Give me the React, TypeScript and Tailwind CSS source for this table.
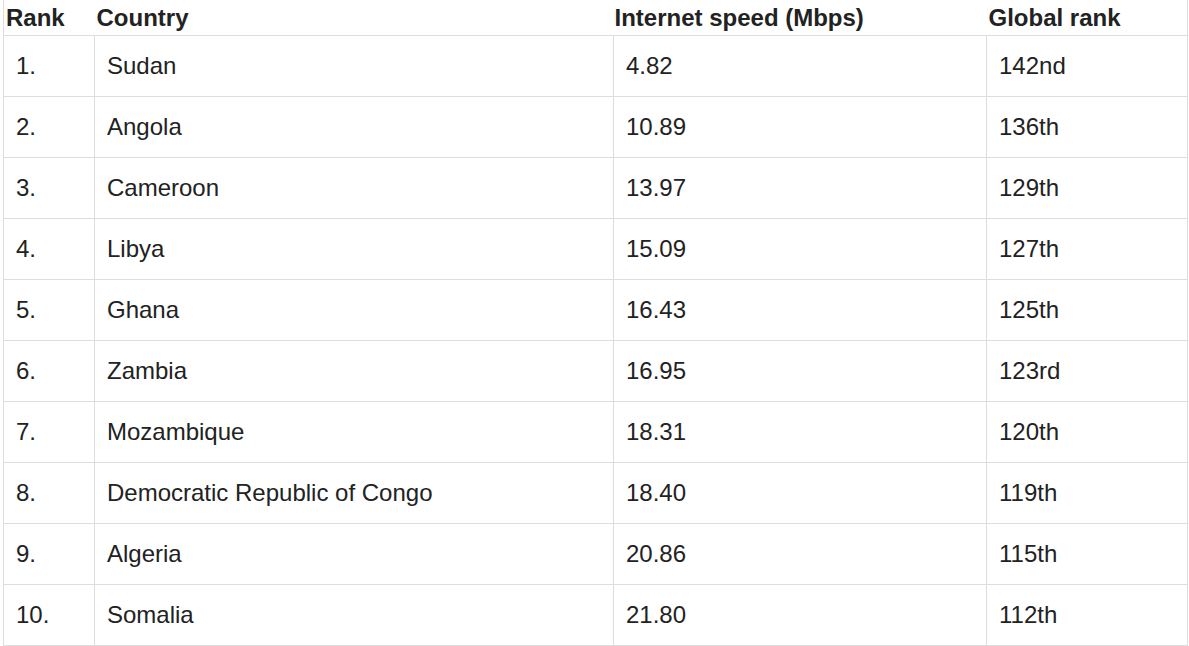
import React from "react";

interface Row {
  rank: string;
  country: string;
  speed: string;
  global: string;
}

const rows: Row[] = [
  { rank: "1.", country: "Sudan", speed: "4.82", global: "142nd" },
  { rank: "2.", country: "Angola", speed: "10.89", global: "136th" },
  { rank: "3.", country: "Cameroon", speed: "13.97", global: "129th" },
  { rank: "4.", country: "Libya", speed: "15.09", global: "127th" },
  { rank: "5.", country: "Ghana", speed: "16.43", global: "125th" },
  { rank: "6.", country: "Zambia", speed: "16.95", global: "123rd" },
  { rank: "7.", country: "Mozambique", speed: "18.31", global: "120th" },
  { rank: "8.", country: "Democratic Republic of Congo", speed: "18.40", global: "119th" },
  { rank: "9.", country: "Algeria", speed: "20.86", global: "115th" },
  { rank: "10.", country: "Somalia", speed: "21.80", global: "112th" },
];

const App: React.FC = () => {
  return (
    <div className="bg-white min-h-screen pl-[3px] font-['Liberation_Sans',Arial,sans-serif] text-[#222]">
      <table className="w-[1184px] table-fixed border-collapse border-x border-[#ddd] text-[24px]">
        <colgroup>
          <col className="w-[91px]" />
          <col className="w-[519px]" />
          <col className="w-[373px]" />
          <col className="w-[201px]" />
        </colgroup>
        {/* header */}
        <thead>
          <tr>
            <th className="text-left font-bold leading-[27px] pt-[4px] pb-[4px] px-[2px]">Rank</th>
            <th className="text-left font-bold leading-[27px] pt-[4px] pb-[4px] px-[2px]">Country</th>
            <th className="text-left font-bold leading-[27px] pt-[4px] pb-[4px] px-[1px]">Internet speed (Mbps)</th>
            <th className="text-left font-bold leading-[27px] pt-[4px] pb-[4px] px-[2px]">Global rank</th>
          </tr>
        </thead>
        {/* rows */}
        <tbody>
          {rows.map((row, idx) => (
            <tr key={idx}>
              <td className="border border-[#ddd] p-3 leading-[36px]">{row.rank}</td>
              <td className="border border-[#ddd] p-3 leading-[36px]">{row.country}</td>
              <td className="border border-[#ddd] p-3 leading-[36px]">{row.speed}</td>
              <td className="border border-[#ddd] p-3 leading-[36px]">{row.global}</td>
            </tr>
          ))}
        </tbody>
      </table>
    </div>
  );
};

export default App;
